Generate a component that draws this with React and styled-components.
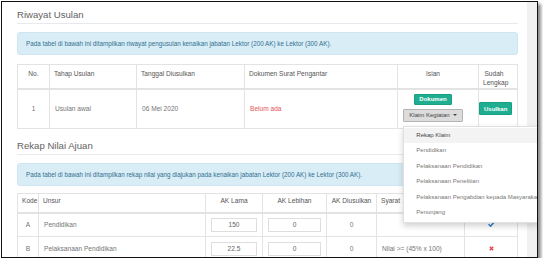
import styled, { createGlobalStyle } from 'styled-components';

const GlobalStyle = createGlobalStyle`
  html, body {
    margin: 0;
    padding: 0;
    background: #ffffff;
  }
  body {
    font-family: "Liberation Sans", Arial, sans-serif;
    color: #6a6a6a;
  }
`;

const riwayatCols = [32, 87, 108, 153, 81, 39];
const rekapCols = [21, 167, 57, 64, 50, 88, 53];

const menuItems = [
  'Rekap Klaim',
  'Pendidikan',
  'Pelaksanaan Pendidikan',
  'Pelaksanaan Penelitian',
  'Pelaksanaan Pengabdian kepada Masyarakat',
  'Penunjang',
];

const rekapRows = [
  { kode: 'A', unsur: 'Pendidikan', lama: '150', lebihan: '0', diusulkan: '0', syarat: '', ok: true },
  { kode: 'B', unsur: 'Pelaksanaan Pendidikan', lama: '22.5', lebihan: '0', diusulkan: '0', syarat: 'Nilai >= (45% x 100)', ok: false },
];

const Check = () => (
  <svg width="7" height="6" viewBox="0 0 7 6">
    <path d="M0.6 3.2 L2.6 5.2 L6.4 0.8" fill="none" stroke="#2a7fc9" strokeWidth="1.5" />
  </svg>
);

const Cross = () => (
  <svg width="5" height="5" viewBox="0 0 5 5">
    <path d="M0.8 0.8 L4.2 4.2 M4.2 0.8 L0.8 4.2" stroke="#e2474b" strokeWidth="1.4" />
  </svg>
);

const App = () => {
  return (
    <>
      <GlobalStyle />
      <Frame>
        <Page>
          <Panel>
            <PanelTitle>Riwayat Usulan</PanelTitle>
            <Alert>
              Pada tabel di bawah ini ditampilkan riwayat pengusulan kenaikan jabatan Lektor (200 AK) ke Lektor (300 AK).
            </Alert>
            <Table $gap={9}>
              <colgroup>
                {riwayatCols.map((w, i) => (
                  <col key={i} style={{ width: w }} />
                ))}
              </colgroup>
              <thead>
                <tr>
                  <Th $h={24} $align="center">No.</Th>
                  <Th $h={24}>Tahap Usulan</Th>
                  <Th $h={24}>Tanggal Diusulkan</Th>
                  <Th $h={24}>Dokumen Surat Pengantar</Th>
                  <Th $h={24} $align="center" $shift={10}>Isian</Th>
                  <Th $h={24} $align="center" $shift={8}>Sudah Lengkap</Th>
                </tr>
              </thead>
              <tbody>
                <tr>
                  <Td $h={40} $align="center">1</Td>
                  <Td $h={40}>Usulan awal</Td>
                  <Td $h={40}>06 Mei 2020</Td>
                  <Td $h={40}>
                    <Missing>Belum ada</Missing>
                  </Td>
                  <Td $h={40} $align="center" $shift={10} $top={4}>
                    <ButtonStack>
                      <Button $variant="success">Dokumen</Button>
                      <DropdownWrap>
                        <Button $variant="default">
                          Klaim Kegiatan <Caret />
                        </Button>
                        <Menu>
                          {menuItems.map((item, i) => (
                            <MenuItem key={item} $active={i === 0}>
                              {item}
                            </MenuItem>
                          ))}
                        </Menu>
                      </DropdownWrap>
                    </ButtonStack>
                  </Td>
                  <Td $h={40} $left={0}>
                    <Button $variant="success" $tall>
                      Usulkan
                    </Button>
                  </Td>
                </tr>
              </tbody>
            </Table>
          </Panel>

          <Panel>
            <PanelTitle>Rekap Nilai Ajuan</PanelTitle>
            <Alert>
              Pada tabel di bawah ini ditampilkan rekap nilai yang diajukan pada kenaikan jabatan Lektor (200 AK) ke Lektor (300 AK).
            </Alert>
            <Table $gap={7}>
              <colgroup>
                {rekapCols.map((w, i) => (
                  <col key={i} style={{ width: w }} />
                ))}
              </colgroup>
              <thead>
                <tr>
                  <Th $h={19} $pad={2} $align="center">Kode</Th>
                  <Th $h={19} $pad={2}>Unsur</Th>
                  <Th $h={19} $pad={2} $align="center">AK Lama</Th>
                  <Th $h={19} $pad={2} $align="center">AK Lebihan</Th>
                  <Th $h={19} $pad={2} $align="center">AK Diusulkan</Th>
                  <Th $h={19} $pad={2}>Syarat</Th>
                  <Th $h={19} $pad={2} $align="center" />
                </tr>
              </thead>
              <tbody>
                {rekapRows.map((row) => (
                  <tr key={row.kode}>
                    <Td $h={24} $align="center">{row.kode}</Td>
                    <Td $h={24}>{row.unsur}</Td>
                    <Td $h={24} $align="center">
                      <ValueBox>{row.lama}</ValueBox>
                    </Td>
                    <Td $h={24} $align="center">
                      <ValueBox>{row.lebihan}</ValueBox>
                    </Td>
                    <Td $h={24} $align="center">{row.diusulkan}</Td>
                    <Td $h={24}>{row.syarat}</Td>
                    <Td $h={24} $align="center">{row.ok ? <Check /> : <Cross />}</Td>
                  </tr>
                ))}
              </tbody>
            </Table>
          </Panel>
        </Page>
        <Gutter />
      </Frame>
    </>
  );
};

export default App;

const Frame = styled.div`
  position: relative;
  margin: 1px 0 0 1px;
  width: 537px;
  height: 257px;
  box-sizing: border-box;
  border: 1px solid #111;
  box-shadow: 3px 3px 3px rgba(0, 0, 0, 0.45);
  display: flex;
  overflow: hidden;
  background: #fff;
`;

const Page = styled.div`
  flex: 1;
  padding: 6px 9px 0 15px;
  display: flex;
  flex-direction: column;
  gap: 10px;
`;

const Gutter = styled.div`
  width: 11px;
  background: #f1f1f1;
`;

const Panel = styled.section`
  display: flex;
  flex-direction: column;
`;

const PanelTitle = styled.h2`
  margin: 0;
  height: 15px;
  font-size: 9.6px;
  font-weight: 400;
  line-height: 14px;
  color: #626262;
  border-bottom: 1px solid #e6e9ed;
`;

const Alert = styled.div`
  margin-top: 8px;
  height: 23px;
  box-sizing: border-box;
  padding: 0 8px;
  display: flex;
  align-items: center;
  background: #d9edf7;
  border: 1px solid #cfe6f2;
  border-radius: 3px;
  color: #31708f;
  font-size: 6.3px;
`;

const Table = styled.table`
  margin-top: ${({ $gap }) => $gap}px;
  width: 500px;
  table-layout: fixed;
  border-collapse: collapse;
  font-size: 6.6px;
  color: #757575;
`;

const Th = styled.th`
  height: ${({ $h }) => $h}px;
  box-sizing: border-box;
  padding: ${({ $pad }) => $pad ?? 4}px ${({ $shift }) => 4 + ($shift || 0)}px 0 4px;
  border: 1px solid #e3e3e3;
  border-bottom: 2px solid #e3e3e3;
  vertical-align: top;
  text-align: ${({ $align }) => $align || 'left'};
  font-weight: 400;
  line-height: 9px;
  color: #555;
`;

const Td = styled.td`
  height: ${({ $h }) => $h}px;
  box-sizing: border-box;
  padding: ${({ $top }) => $top ?? 0}px ${({ $shift }) => 5 + ($shift || 0)}px 0
    ${({ $left }) => $left ?? 5}px;
  border: 1px solid #e3e3e3;
  vertical-align: ${({ $top }) => ($top !== undefined ? 'top' : 'middle')};
  text-align: ${({ $align }) => $align || 'left'};
  line-height: 9px;
`;

const Missing = styled.span`
  color: #e5535b;
`;

const ButtonStack = styled.div`
  display: flex;
  flex-direction: column;
  align-items: center;
  gap: 4px;
`;

const Button = styled.button`
  display: inline-flex;
  align-items: center;
  justify-content: center;
  vertical-align: middle;
  font-family: inherit;
  font-size: 6px;
  line-height: 1;
  padding: 0 ${({ $variant }) => ($variant === 'default' ? 5 : 4)}px;
  height: ${({ $variant, $tall }) => ($variant === 'default' || $tall ? 13 : 11)}px;
  border-radius: 1px;
  cursor: pointer;
  white-space: nowrap;
  ${({ $variant }) =>
    $variant === 'success'
      ? `
    background: #1fae8f;
    border: 1px solid #19a083;
    color: #fff;
    font-weight: 700;
  `
      : `
    background: #dcdcdc;
    border: 1px solid #b4b4b4;
    color: #444;
  `}
`;

const Caret = styled.span`
  display: inline-block;
  margin-left: 3px;
  border-top: 2.5px solid #444;
  border-left: 2px solid transparent;
  border-right: 2px solid transparent;
`;

const DropdownWrap = styled.div`
  position: relative;
  display: flex;
`;

const Menu = styled.ul`
  position: absolute;
  top: 17px;
  left: 0;
  z-index: 5;
  margin: 0;
  padding: 1px 0;
  width: 134px;
  list-style: none;
  background: #fff;
  border: 1px solid rgba(0, 0, 0, 0.12);
  box-shadow: 0 3px 6px rgba(0, 0, 0, 0.18);
  text-align: left;
`;

const MenuItem = styled.li`
  height: 15.6px;
  line-height: 15.6px;
  padding: 0 12px;
  font-size: 6px;
  white-space: nowrap;
  color: ${({ $active }) => ($active ? '#444' : '#777')};
  background: ${({ $active }) => ($active ? '#f3f3f3' : 'transparent')};
`;

const ValueBox = styled.div`
  height: 14px;
  box-sizing: border-box;
  border: 1px solid #dedede;
  display: flex;
  align-items: center;
  justify-content: center;
  color: #666;
`;
